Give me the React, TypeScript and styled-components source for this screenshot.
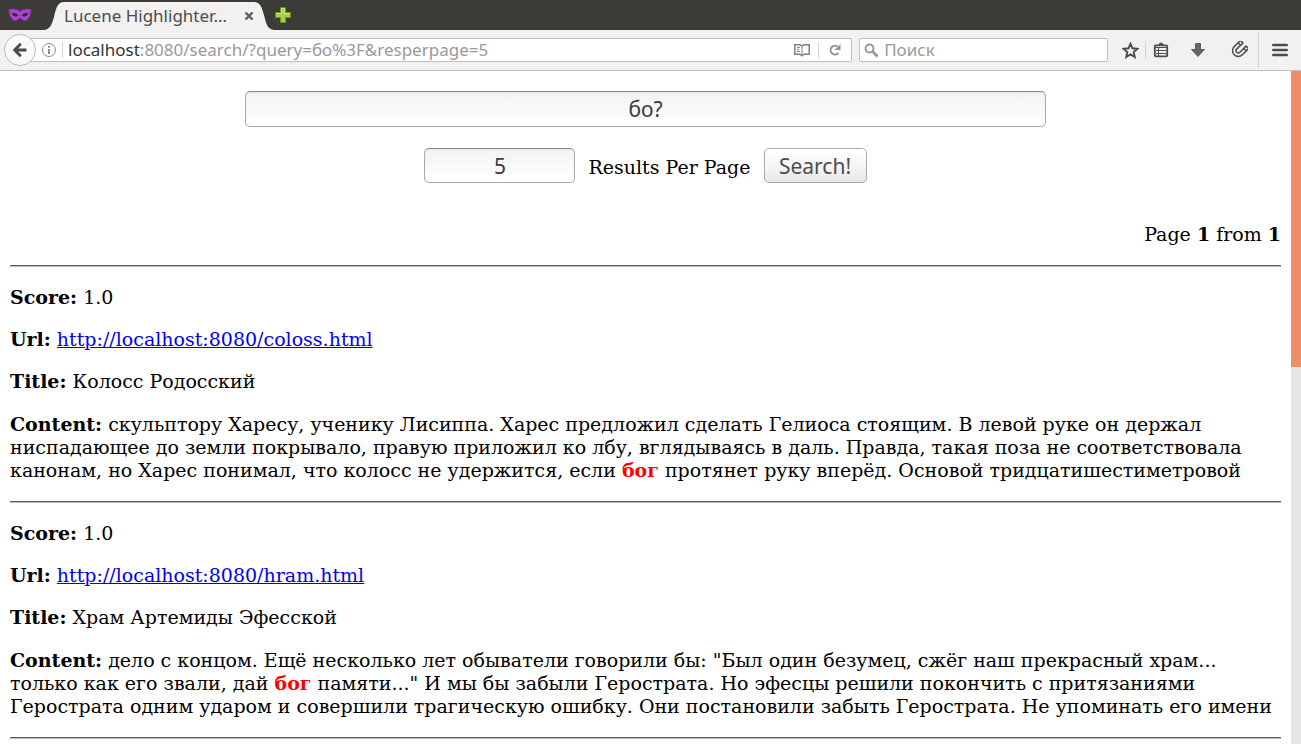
import React from "react";
import styled, { createGlobalStyle } from "styled-components";

const uiFont = `"Noto Sans", "Open Sans", sans-serif`;

const GlobalStyle = createGlobalStyle`
  *, *::before, *::after { box-sizing: border-box; }
  body { margin: 0; background: #fff; }
`;

const Browser = styled.div`
  display: flex;
  flex-direction: column;
  height: 100vh;
  overflow: hidden;
`;

const TabBar = styled.header`
  display: flex;
  align-items: stretch;
  flex: none;
  height: 30px;
  background: #3c3b37;
  font-family: ${uiFont};
`;

const PrivateBadge = styled.span`
  display: flex;
  align-items: center;
  padding: 0 0 0 8px;
  width: 44px;
`;

const Tab = styled.div`
  display: flex;
  align-items: flex-end;
  width: 230px;
`;

const TabEdge = styled.svg`
  flex: none;
  display: block;
`;

const TabLabel = styled.div`
  display: flex;
  align-items: center;
  justify-content: space-between;
  flex: 1;
  min-width: 0;
  height: 28px;
  background: #f2f1f0;
`;

const TabTitle = styled.span`
  font-size: 17px;
  line-height: 24px;
  color: #4c4c4c;
  white-space: nowrap;
`;

const IconButton = styled.button<{ $width: number }>`
  display: flex;
  align-items: center;
  justify-content: center;
  flex: none;
  width: ${(p) => p.$width}px;
  padding: 0;
  border: 0;
  background: none;

  svg { flex: none; }
`;

const Toolbar = styled.nav`
  display: flex;
  align-items: center;
  flex: none;
  height: 41px;
  padding-left: 4px;
  background: #f2f1f0;
  border-bottom: 1px solid #c3bebb;
  font-family: ${uiFont};
`;

const BackButton = styled.button`
  position: relative;
  z-index: 1;
  display: flex;
  align-items: center;
  justify-content: center;
  flex: none;
  width: 32px;
  height: 32px;
  padding: 0;
  border: 1px solid #bfbcba;
  border-radius: 50%;
  background: #fafafa;
`;

const AddressBar = styled.div`
  display: flex;
  align-items: center;
  flex: 824 1 0;
  min-width: 0;
  height: 24px;
  margin-left: -6px;
  padding-left: 11px;
  border: 1px solid #c3bfbc;
  border-left: 0;
  border-radius: 0 2px 2px 0;
  background: #fff;
`;

const Divider = styled.span<{ $height: number }>`
  flex: none;
  width: 1px;
  height: ${(p) => p.$height}px;
  background: #d5d3d1;
`;

const DividerCell = styled.span`
  display: flex;
  justify-content: center;
  flex: none;
  width: 10px;
`;

const Url = styled.a`
  flex: 1;
  min-width: 0;
  overflow: hidden;
  padding-left: 1px;
  font-size: 17px;
  line-height: 22px;
  color: #999;
  text-decoration: none;
  white-space: nowrap;
`;

const Host = styled.span`
  color: #333;
`;

const SearchBar = styled.label`
  display: flex;
  align-items: center;
  flex: 247 1 0;
  min-width: 0;
  height: 24px;
  margin: 0 7px;
  padding-left: 4px;
  gap: 5px;
  border: 1px solid #c3bfbc;
  border-radius: 2px;
  background: #fff;
`;

const SearchField = styled.input`
  flex: 1;
  min-width: 0;
  height: 22px;
  padding: 0;
  border: 0;
  outline: 0;
  background: none;
  font: 17px/22px ${uiFont};
  &::placeholder { color: #999; opacity: 1; }
`;

const Viewport = styled.div`
  display: flex;
  flex: 1;
  min-height: 0;
`;

const Page = styled.main`
  flex: 1;
  min-width: 0;
  overflow: hidden;
  padding: 20px 10px 0;
  font: 19px/23px "DejaVu Serif", serif;
  color: #000;
`;

const ScrollTrack = styled.div`
  flex: none;
  width: 10px;
  background: #e5e5e5;
`;

const ScrollThumb = styled.div`
  height: 44%;
  background: #f08e69;
`;

const SearchForm = styled.form`
  display: flex;
  flex-direction: column;
  align-items: center;
  gap: 21px;
`;

const TextBox = styled.input<{ $width: string; $height: number }>`
  width: ${(p) => p.$width};
  height: ${(p) => p.$height}px;
  padding: 0;
  border: 1px solid #aaa;
  border-top-color: #8c8c8c;
  border-radius: 5px;
  outline: 0;
  background: linear-gradient(#f3f3f3, #fff);
  box-shadow: inset 0 1px 1px #e2e2e2;
  font: 21px/30px ${uiFont};
  color: #3c3c3c;
  text-align: center;
`;

const FormRow = styled.div`
  display: flex;
  align-items: center;
  gap: 13px;
`;

const CountLabel = styled.label`
  padding-top: 4px;
`;

const SubmitButton = styled.button`
  width: 103px;
  height: 35px;
  padding: 0;
  border: 1px solid #aaa;
  border-radius: 5px;
  background: linear-gradient(#fff, #f7f6f6 50%, #e9e7e6);
  font: 21px/30px ${uiFont};
  color: #4c4c4c;
`;

const PageInfo = styled.p`
  margin: 40px 0 19px;
  text-align: right;
`;

const Rule = styled.hr`
  height: 2px;
  margin: 0;
  border: 0;
  border-top: 1px solid #5c5c5c;
  border-bottom: 1px solid #bbb;
`;

const Result = styled.article`
  padding: 19px 0;
`;

const Field = styled.p`
  margin: 0 0 19px;
`;

const Snippet = styled.p`
  margin: 20px 0 0;
`;

const ResultLink = styled.a`
  color: #00e;
  text-decoration: underline;
`;

const Hit = styled.b`
  color: #f00;
`;

type ResultData = {
  score: string;
  url: string;
  title: string;
  before: string;
  hit: string;
  after: string;
};

const results: ResultData[] = [
  {
    score: "1.0",
    url: "http://localhost:8080/coloss.html",
    title: "Колосс Родосский",
    before:
      "скульптору Харесу, ученику Лисиппа. Харес предложил сделать Гелиоса стоящим. В левой руке он держал ниспадающее до земли покрывало, правую приложил ко лбу, вглядываясь в даль. Правда, такая поза не соответствовала канонам, но Харес понимал, что колосс не удержится, если ",
    hit: "бог",
    after: " протянет руку вперёд. Основой тридцатишестиметровой",
  },
  {
    score: "1.0",
    url: "http://localhost:8080/hram.html",
    title: "Храм Артемиды Эфесской",
    before:
      'дело с концом. Ещё несколько лет обыватели говорили бы: "Был один безумец, сжёг наш прекрасный храм... только как его звали, дай ',
    hit: "бог",
    after:
      ' памяти..." И мы бы забыли Герострата. Но эфесцы решили покончить с притязаниями Герострата одним ударом и совершили трагическую ошибку. Они постановили забыть Герострата. Не упоминать его имени',
  },
];

const MaskIcon = () => (
  <svg width="24" height="14" viewBox="0 0 24 14">
    <path
      d="M1 1.500C4 .8 9 .8 12 3.500C15 .8 20 .8 23 1.500C23 7 21 12.500 16.500 12.500C14 12.500 13 10 12 10C11 10 10 12.500 7.500 12.500C3 12.500 1 7 1 1.500Z"
      fill="#a945cf"
      stroke="#7d2aa3"
      strokeWidth="0.800"
    />
    <path d="M3.500 5.500Q7.500 3.500 10.500 7.800Q6 10 3.500 5.500ZM20.500 5.500Q16.500 3.500 13.500 7.800Q18 10 20.500 5.500Z" fill="#3a2b42" />
  </svg>
);

const CloseIcon = () => (
  <svg width="10" height="10" viewBox="0 0 10 10">
    <path d="M1.500 1.500L8.500 8.500M8.500 1.500L1.500 8.500" stroke="#5a5a5a" strokeWidth="2.400" />
  </svg>
);

const PlusIcon = () => (
  <svg width="18" height="18" viewBox="0 0 18 18">
    <path d="M6.500 1.500H11.500V6.500H16.500V11.500H11.500V16.500H6.500V11.500H1.500V6.500H6.500Z" fill="#a8cf45" stroke="#63961f" />
    <path d="M7.500 7.500V2.500H10.500V7.500H15.500M2.500 7.500H7.500" fill="none" stroke="#d3e88f" />
  </svg>
);

const BackIcon = () => (
  <svg width="16" height="16" viewBox="0 0 16 16">
    <path d="M8.800 1.800L2.800 8L8.800 14.200M3 8H14.500" fill="none" stroke="#4c4c4c" strokeWidth="3" />
  </svg>
);

const InfoIcon = () => (
  <svg width="16" height="16" viewBox="0 0 16 16">
    <circle cx="8" cy="8" r="6.500" fill="none" stroke="#8c8c8c" />
    <path d="M8 7V12M8 4V5.800" stroke="#808080" strokeWidth="1.800" />
  </svg>
);

const ReaderIcon = () => (
  <svg width="16" height="14" viewBox="0 0 16 14">
    <path d="M.8 1.800H6L8 3L10 1.800H15.200V11.200H10L8 12.800L6 11.200H.8Z" fill="none" stroke="#808080" strokeWidth="1.500" />
    <path d="M8 3V12M3 4.500H6M3 6.500H5M3 8.500H6" stroke="#808080" strokeWidth="1" />
  </svg>
);

const ReloadIcon = () => (
  <svg width="14" height="14" viewBox="0 0 14 14">
    <path d="M9.500 3.500A4.400 4.400 0 1 0 10.300 10" fill="none" stroke="#8997a1" strokeWidth="2" />
    <path d="M12.500 1V7H6.500Z" fill="#8997a1" />
  </svg>
);

const MagnifierIcon = () => (
  <svg width="15" height="15" viewBox="0 0 15 15">
    <circle cx="5.500" cy="5.500" r="4" fill="none" stroke="#949494" strokeWidth="1.800" />
    <path d="M8.500 8.500L13.500 13.500" stroke="#949494" strokeWidth="2.600" />
  </svg>
);

const StarIcon = () => (
  <svg width="17" height="17" viewBox="0 0 17 17">
    <path
      d="M8.500 1.800L10.500 6.300L15.400 6.800L11.700 10.100L12.800 15L8.500 12.400L4.200 15L5.300 10.100L1.600 6.800L6.500 6.300Z"
      fill="none"
      stroke="#4c4c4c"
      strokeWidth="1.900"
    />
  </svg>
);

const ClipboardIcon = () => (
  <svg width="16" height="16" viewBox="0 0 16 16">
    <path d="M4.500 3.500L7 .8H9L11.500 3.500Z" fill="#4c4c4c" />
    <rect x="1.800" y="3.300" width="12.400" height="11" rx="1" fill="#f2f1f0" stroke="#4c4c4c" strokeWidth="1.800" />
    <path d="M2 5.500H14M3 8.500H13.500M3 11.500H13.500" stroke="#4c4c4c" strokeWidth="1.200" />
    <path d="M5.500 5V14" stroke="#4c4c4c" strokeWidth="1" />
  </svg>
);

const DownloadIcon = () => (
  <svg width="16" height="16" viewBox="0 0 16 16">
    <path d="M5.500 1.500H10.500V7.500H14.500L8 14.500L1.500 7.500H5.500Z" fill="#666" stroke="#4c4c4c" strokeWidth="0.800" />
  </svg>
);

const MagnetIcon = () => (
  <svg width="18" height="18" viewBox="0 0 18 18">
    <g transform="rotate(45 9 9)" fill="none">
      <path d="M5 .5V10A4 4 0 0 0 13 10V.5" stroke="#4c4c4c" strokeWidth="5" />
      <path d="M5 5.200V10A4 4 0 0 0 13 10V5.200M5 2V3.800M13 2V3.800" stroke="#f2f1f0" strokeWidth="2" />
    </g>
  </svg>
);

const MenuIcon = () => (
  <svg width="16" height="14" viewBox="0 0 16 14">
    <path d="M1.300 2H14.700M1.300 7H14.700M1.300 12H14.700" stroke="#4c4c4c" strokeWidth="2.600" strokeLinecap="round" />
  </svg>
);

export default function App() {
  return (
    <Browser>
      <GlobalStyle />
      <TabBar>
        <PrivateBadge>
          <MaskIcon />
        </PrivateBadge>
        <Tab>
          <TabEdge width="20" height="28" viewBox="0 0 20 28">
            <path d="M0 28C7 27 8 21 10 15C12 7 13 0 20 0V28Z" fill="#f2f1f0" />
          </TabEdge>
          <TabLabel>
            <TabTitle>Lucene Highlighter…</TabTitle>
            <IconButton type="button" aria-label="Close tab" $width={10}>
              <CloseIcon />
            </IconButton>
          </TabLabel>
          <TabEdge width="20" height="28" viewBox="0 0 20 28">
            <path d="M0 0C7 0 8 7 10 13C12 21 13 27 20 28H0Z" fill="#f2f1f0" />
          </TabEdge>
        </Tab>
        <IconButton type="button" aria-label="New tab" $width={18}>
          <PlusIcon />
        </IconButton>
      </TabBar>

      <Toolbar>
        <BackButton type="button" aria-label="Back">
          <BackIcon />
        </BackButton>
        <AddressBar>
          <IconButton type="button" aria-label="Site information" $width={16}>
            <InfoIcon />
          </IconButton>
          <DividerCell>
            <Divider $height={16} />
          </DividerCell>
          <Url href="#">
            <Host>localhost</Host>:8080/search/?query=бо%3F&amp;resperpage=5
          </Url>
          <IconButton type="button" aria-label="Reader view" $width={32}>
            <ReaderIcon />
          </IconButton>
          <Divider $height={16} />
          <IconButton type="button" aria-label="Reload" $width={32}>
            <ReloadIcon />
          </IconButton>
        </AddressBar>
        <SearchBar>
          <MagnifierIcon />
          <SearchField type="text" placeholder="Поиск" aria-label="Поиск" />
        </SearchBar>
        <IconButton type="button" aria-label="Bookmark" $width={30}>
          <StarIcon />
        </IconButton>
        <Divider $height={18} />
        <IconButton type="button" aria-label="Bookmarks list" $width={30}>
          <ClipboardIcon />
        </IconButton>
        <IconButton type="button" aria-label="Downloads" $width={44}>
          <DownloadIcon />
        </IconButton>
        <IconButton type="button" aria-label="Magnet" $width={38}>
          <MagnetIcon />
        </IconButton>
        <Divider $height={36} />
        <IconButton type="button" aria-label="Menu" $width={42}>
          <MenuIcon />
        </IconButton>
      </Toolbar>

      <Viewport>
        <Page>
          <SearchForm onSubmit={(e) => e.preventDefault()}>
            <TextBox $width="63%" $height={36} type="text" defaultValue="бо?" aria-label="Query" />
            <FormRow>
              <TextBox $width="151px" $height={35} id="count" type="text" defaultValue="5" />
              <CountLabel htmlFor="count">Results Per Page</CountLabel>
              <SubmitButton type="submit">Search!</SubmitButton>
            </FormRow>
          </SearchForm>
          <PageInfo>
            Page <b>1</b> from <b>1</b>
          </PageInfo>
          <Rule />
          {results.map((r) => (
            <React.Fragment key={r.url}>
              <Result>
                <Field>
                  <b>Score:</b> {r.score}
                </Field>
                <Field>
                  <b>Url:</b> <ResultLink href={r.url}>{r.url}</ResultLink>
                </Field>
                <Field>
                  <b>Title:</b> {r.title}
                </Field>
                <Snippet>
                  <b>Content:</b> {r.before}
                  <Hit>{r.hit}</Hit>
                  {r.after}
                </Snippet>
              </Result>
              <Rule />
            </React.Fragment>
          ))}
        </Page>
        <ScrollTrack>
          <ScrollThumb />
        </ScrollTrack>
      </Viewport>
    </Browser>
  );
}
